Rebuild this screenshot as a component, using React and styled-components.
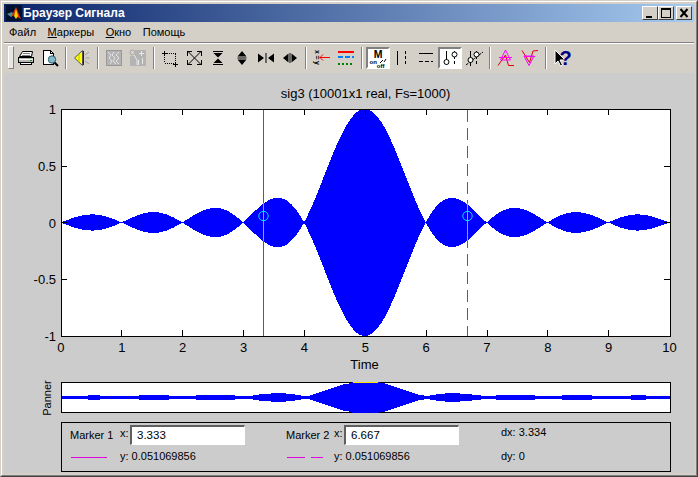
import React from 'react';
import styled, { createGlobalStyle } from 'styled-components';

const Global = createGlobalStyle`
  html, body { margin: 0; padding: 0; background: #d4d0c8; overflow: hidden; }
  #root { width: 698px; height: 477px; }
`;

const Win = styled.div`
  box-sizing: border-box; width: 698px; height: 477px;
  border: 1px solid; border-color: #d4d0c8 #404040 #404040 #d4d0c8;
  background: #d4d0c8; font-family: "Liberation Sans", Arial, sans-serif;
`;
const WinInner = styled.div`
  box-sizing: border-box; height: 100%;
  border: 1px solid; border-color: #fff #808080 #808080 #fff;
  padding: 2px; display: flex; flex-direction: column;
`;
const TitleBar = styled.div`
  height: 18px; flex: none; display: flex; align-items: center; padding: 0 2px;
  background: linear-gradient(90deg, #0a246a, #a6caf0);
`;
const AppIcon = styled.svg`width: 16px; height: 16px; flex: none; display: block;`;
const TitleText = styled.div`
  margin-left: 1px; flex: 1; color: #fff; font-weight: 700; font-size: 12px; line-height: 18px; white-space: nowrap;
`;
const CapBtn = styled.div`
  width: 16px; height: 14px; box-sizing: border-box; background: #d4d0c8; margin-left: ${p => p.$gap || 0}px;
  border: 1px solid; border-color: #fff #404040 #404040 #fff; display: flex; align-items: center; justify-content: center;
`;
const CapIcon = styled.svg`width: 14px; height: 12px; display: block;`;
const MenuBar = styled.div`
  height: 20px; flex: none; display: flex; align-items: center; padding-left: 5px; gap: 11.5px;
  font-size: 11px; color: #000; box-sizing: border-box;
`;
const MenuItem = styled.span`
  white-space: nowrap;
  u { text-decoration: underline; }
`;
const Toolbar = styled.div`
  flex: none; height: 31px; box-sizing: border-box; border-top: 1px solid #808080; 
  box-shadow: inset 0 1px 0 #fff; display: flex; align-items: flex-start; padding: 4px 0 0 4px;
`;
const Handle = styled.div`
  width: 6px; height: 23px; margin-top: -1px; box-sizing: border-box; background: #e8e6e0;
  border: 1px solid; border-color: #fff #808080 #808080 #fff;
`;
const Sep = styled.div`
  width: 8px; height: 22px; flex: none; display: flex; justify-content: center;
  &::before { content: ''; width: 2px; height: 22px; box-sizing: border-box; border-left: 1px solid #808080; border-right: 1px solid #fff; }
`;
const ToolBtn = styled.div`
  width: 24px; height: 22px; flex: none; box-sizing: border-box;
  ${p => p.$on ? 'border: 2px solid; border-color: #808080 #fff #fff #808080; background: #fff;' : ''}
  display: flex; align-items: center; justify-content: center;
`;
const Glyph = styled.svg`width: 24px; height: 22px; display: block; flex: none; overflow: visible; font-family: "Liberation Sans", sans-serif;`;

const Content = styled.div`
  flex: 1; background: #cccccc; padding-left: 57px; display: flex; flex-direction: column; color: #000;
`;
const PlotTitle = styled.div`
  width: 609px; margin-top: 13px; height: 16px; line-height: 16px; text-align: center; font-size: 13px;
`;
const ChartWrap = styled.div`margin-left: -57px; height: 254px;`;
const ChartSvg = styled.svg`
  display: block; width: 690px; height: 254px; font-family: "Liberation Sans", Arial, sans-serif; font-size: 13px;
`;
const AxisLabel = styled.div`
  width: 607px; margin-top: 1px; height: 16px; line-height: 16px; text-align: center; font-size: 13px;
`;
const PannerRow = styled.div`
  display: flex; margin-left: -21px; margin-top: 9px; height: 31px;
`;
const PannerLabel = styled.div`
  width: 21px; height: 31px; display: flex; align-items: center; justify-content: center; font-size: 11px;
  span { transform: rotate(-90deg); display: block; margin-left: -7px; }
`;
const PannerSvg = styled.svg`display: block; width: 610px; height: 31px;`;
const Readout = styled.div`
  box-sizing: border-box; width: 610px; height: 50px; margin-top: 9px; border: 1px solid #000;
  display: flex; padding: 2px 0 0 8px; font-size: 11px;
`;
const MarkerGroup = styled.div`
  width: ${p => p.$w}px; flex: none; display: grid; grid-template-columns: ${p => p.$label}px 10px 115px; grid-template-rows: 20px 24px; align-items: center;
`;
const SmallLabel = styled.span`white-space: nowrap; line-height: 13px;`;
const XLabel = styled.span`margin-top: -4px; line-height: 13px;`;
const Field = styled.div`
  box-sizing: border-box; height: 20px; background: #fff; font-size: 11.500px; line-height: 17px; padding-left: 5px;
  border: 1px solid; border-color: #606060 #fff #fff #606060; border-top-width: 2px; border-left-width: 2px;
`;
const SampleLine = styled.svg`display: block; width: 38px; height: 3px;`;
const YValue = styled.span`grid-column: 2 / 4; white-space: nowrap; line-height: 13px; margin-top: -1px;`;
const Delta = styled.div`
  display: flex; flex-direction: column; gap: 11px; padding-top: 1px; line-height: 13px;
`;

const sinc = t => { const d = Math.abs(t - 5); return d < 1e-6 ? 1 : Math.abs(Math.sin(Math.PI * d) / (Math.PI * d)); };
const X0 = 61, X1 = 670, SCALE = 60.87;
const tOf = x => (x - 60.5) / SCALE;

const envelopePath = () => {
  const top = [], bot = [];
  for (let x = X0 + 1; x <= X1; x++) {
    const h = Math.max(0.5, sinc(tOf(x)) * 113.5);
    top.push(`${x},${222.5 - h}`); bot.unshift(`${x},${222.5 + h}`);
  }
  return top.concat(bot).join(' ');
};

const pannerPath = () => {
  const top = [], bot = [];
  for (let x = 1; x < 609; x++) {
    const step = Math.floor(x / 3) * 3 + 1;
    const h = Math.min(15, Math.max(1, Math.ceil(sinc(step / SCALE) * 15)));
    const half = h + 0.5;
    top.push(`${x},${15.5 - half}`, `${x + 1},${15.5 - half}`);
    bot.unshift(`${x + 1},${15.5 + half}`, `${x},${15.5 + half}`);
  }
  return top.concat(bot).join(' ');
};

const Chart = () => {
  const xt = [0,1,2,3,4,5,6,7,8,9,10];
  const yt = [[1,109],[0.5,166],[0,222.5],[-0.5,279],[-1,336]];
  return (
    <ChartSvg viewBox="4 102 690 254">
      <rect x="61.5" y="109.5" width="609" height="226.5" fill="#fff" />
      <polygon points={envelopePath()} fill="#0000ff" shapeRendering="crispEdges" />
      {xt.map(t => {
        const x = Math.floor(61 + t * SCALE) + 0.5;
        return <g key={t}>
          {t > 0 && t < 10 && <path d={`M${x} 109v6M${x} 336v-6`} stroke="#000" shapeRendering="crispEdges" />}
          <text x={60.9 + t * SCALE} y="352" textAnchor="middle">{t}</text>
        </g>;
      })}
      {yt.map(([v, y]) => <g key={v}>
        {Math.abs(v) < 1 && <path d={`M61 ${y}h6M670 ${y}h-6`} stroke="#000" shapeRendering="crispEdges" />}
        <text x="56" y={y + 5} textAnchor="end">{v}</text>
      </g>)}
      <rect x="61.5" y="109.5" width="609" height="226.5" fill="none" stroke="#000" shapeRendering="crispEdges" />
      <path d="M263.5 110V336" stroke="#e000e0" shapeRendering="crispEdges" />
      <path d="M467.5 110V336" stroke="#e000e0" strokeDasharray="12 6" shapeRendering="crispEdges" />
      <path d="M263.5 203V241M467.5 203V241" stroke="#00e0ff" shapeRendering="crispEdges" />
      <circle cx="263.5" cy="216" r="4.7" fill="none" stroke="#00e0ff" />
      <circle cx="467.5" cy="216" r="4.7" fill="none" stroke="#00e0ff" />
    </ChartSvg>
  );
};

const Panner = () => (
  <PannerSvg viewBox="0 0 610 31">
    <rect width="610" height="31" fill="#000" />
    <rect x="1" y="1" width="608" height="29" fill="#fff" />
    <polygon points={pannerPath()} fill="#0000ff" shapeRendering="crispEdges" />
    <rect x="292" y="0" width="25" height="1" fill="#ffe000" />
  </PannerSvg>
);

const S = { shapeRendering: 'crispEdges' };
const Icons = {
  print: <>
    <path d="M8.5 4.500h10l-1 5h-12z" fill="#fff" stroke="#000" />
    <path d="M9 6.500h7M8 8.500h8" stroke="#808080" {...S} />
    <path d="M4.5 10.5h15v5h-15z" fill="#b8b8b8" stroke="#000" {...S} />
    <path d="M5 12h14" stroke="#fff" {...S} />
    <path d="M6.5 15.5h11v2h-11z" fill="#fff" stroke="#000" {...S} />
    <path d="M16 13h2" stroke="#00a000" {...S} />
  </>,
  preview: <>
    <path d="M5.5 3.5h7l3 3v11h-10z" fill="#fff" stroke="#000" {...S} />
    <path d="M12.5 3.5v3h3" fill="none" stroke="#000" {...S} />
    <circle cx="14" cy="12.5" r="3.7" fill="#88b8c8" stroke="#206070" />
    <path d="M16.5 15.5l3.5 3.5" stroke="#000" strokeWidth="2" />
  </>,
  speaker: <>
    <path d="M4.5 11l8-7.5v15z" fill="#ffff00" stroke="#555" />
    <path d="M9 7v8" stroke="#c0c000" />
    <path d="M13 4v14" stroke="#222" {...S} />
    <path d="M15 8l4-3M15.5 11h4M15 14l4 3" stroke="#a0a0a0" />
  </>,
  dis1: <>
    <rect x="4" y="3" width="16" height="16" fill="#b4b4b4" {...S} />
    <path d="M6 5l3 3-2 3 3 3-2 3M12 5l-2 3 3 3-2 3 3 3M17 5l-3 3 3 3-3 3 3 3" fill="none" stroke="#e4e4e4" />
    <path d="M4.5 3.5h15v15h-15z" fill="none" stroke="#989898" {...S} />
  </>,
  dis2: <>
    <path d="M9 3h11v16H4V9h5z" fill="#b4b4b4" {...S} />
    <circle cx="6.500" cy="5.500" r="2.500" fill="none" stroke="#a8a8a8" />
    <path d="M8 8l3 5v5" fill="none" stroke="#e8e8e8" />
    <path d="M15.500 4v5M13 6.500h5M16.500 11v6M12.500 13v5" stroke="#e8e8e8" {...S} />
  </>,
  zoomBox: <>
    <path d="M7 6.500h11M6.500 8v8M7 16.500h11M17.500 7v8" fill="none" stroke="#000" strokeDasharray="1 1" {...S} />
    <path d="M4 6.500h5M6.500 4v5M15 17.500h5M17.500 15v5" stroke="#000" {...S} />
  </>,
  zoomAll: <>
    <path d="M6 4.500l13 13M19 4.500L6 17.500" stroke="#000" />
    <path d="M5 4.500h5M5.500 4v5M20 4.500h-5M19.500 4v5M5 17.500h5M5.500 18v-5M20 17.500h-5M19.500 18v-5" stroke="#000" fill="none" {...S} />
  </>,
  zoomY: <>
    <path d="M7 4h10v1H7zM7 17h10v1H7zM7.500 6h9L12 10.500zM7.500 16h9L12 11.500z" fill="#000" />
  </>,
  zoomYOut: <>
    <path d="M12 4l4.500 5.500h-9zM12 18l4.500-5.500h-9zM7.500 10.500h9v1h-9z" fill="#000" />
  </>,
  zoomX: <>
    <path d="M4 6.500l6 4.500-6 4.500zM20 6.500l-6 4.500 6 4.500zM11.500 6h1v10h-1z" fill="#000" />
  </>,
  zoomXOut: <>
    <path d="M10.500 6.500L5 11l5.500 4.500zM13.500 6.500L19 11l-5.500 4.500zM11.500 6h1v10h-1z" fill="#000" />
  </>,
  markerSet: <>
    <text transform="translate(4.500 3) rotate(90)" fontSize="7" fontWeight="700" x="0" y="0" textLength="15">x=y</text>
    <path d="M10 10.500h10" stroke="#ff0000" {...S} />
    <path d="M13 7.500l-3 3 3 3" fill="none" stroke="#ff0000" />
  </>,
  lines: <>
    <rect x="4" y="3.500" width="16" height="2" fill="#ff0000" {...S} />
    <path d="M4 10h16" stroke="#0080ff" strokeWidth="2" strokeDasharray="5 2" {...S} />
    <path d="M4 16.500h16" stroke="#008000" strokeWidth="2" strokeDasharray="2 2" {...S} />
  </>,
  mark: <>
    <text x="12" y="10.500" fontSize="10.500" fontWeight="700" textAnchor="middle">M</text>
    <text x="3.500" y="17" fontSize="6" fontWeight="700">on</text>
    <path d="M14 16l3-3M18 15l2-3" stroke="#000" />
    <text x="10.800" y="21" fontSize="6" fontWeight="700">off</text>
  </>,
  vlines: <>
    <path d="M7.500 4v14" stroke="#000" {...S} />
    <path d="M15.500 4v14" stroke="#000" strokeDasharray="3 2" {...S} />
  </>,
  hlines: <>
    <path d="M5 6.500h14" stroke="#000" {...S} />
    <path d="M5 14.500h14" stroke="#000" strokeDasharray="4 2" {...S} />
  </>,
  track: <>
    <path d="M8.500 4v14" stroke="#000" strokeWidth="1" {...S} />
    <circle cx="8.500" cy="15" r="2.500" fill="#fff" stroke="#000" />
    <path d="M16.500 4v14" stroke="#000" strokeDasharray="3 2" {...S} />
    <circle cx="16.500" cy="7.500" r="2.500" fill="#fff" stroke="#000" />
  </>,
  trackSlope: <>
    <path d="M8.500 4v15" stroke="#000" {...S} />
    <path d="M14.500 4v15" stroke="#000" strokeDasharray="3 2" {...S} />
    <path d="M4 18L21 5" stroke="#000" strokeDasharray="3 1" />
    <circle cx="8.500" cy="13" r="2.500" fill="#fff" stroke="#000" />
    <circle cx="14.500" cy="7.500" r="2.500" fill="#fff" stroke="#000" />
  </>,
  peak: <>
    <path d="M4 18.500L11.500 8l3 10.500H20" fill="none" stroke="#e00000" />
    <path d="M11.500 3L6.500 13h10z" fill="none" stroke="#ff00ff" />
    <path d="M5 10.500h13" stroke="#ff00ff" {...S} />
  </>,
  valley: <>
    <path d="M4 3.500l7.500 12 3.500-11.500 5-.5" fill="none" stroke="#e00000" />
    <path d="M11 18.500L6 9h10z" fill="none" stroke="#ff00ff" />
    <path d="M6 9.500h11" stroke="#ff00ff" {...S} />
  </>,
  help: <>
    <path d="M5 3v14l3-3 2.500 5 2-1-2.500-5h5z" fill="#000" stroke="#fff" />
    <text x="15.500" y="17.500" fontSize="20" fontWeight="700" fill="#000080" textAnchor="middle">?</text>
  </>,
};

const Tool = ({ name, on }) => (
  <ToolBtn $on={on}>
    <Glyph viewBox="0 0 24 22">{Icons[name]}</Glyph>
  </ToolBtn>
);

export default function App() {
  const groups = [
    ['print', 'preview'], ['speaker'], ['dis1', 'dis2'],
    ['zoomBox', 'zoomAll', 'zoomY', 'zoomYOut', 'zoomX', 'zoomXOut'],
    ['markerSet', 'lines'], ['mark', 'vlines', 'hlines', 'track', 'trackSlope'],
    ['peak', 'valley'], ['help'],
  ];
  return (
    <Win>
      <Global />
      <WinInner>
        <TitleBar>
          <AppIcon viewBox="0 0 16 16">
            <rect width="16" height="16" fill="#001030" />
            <path d="M1 9l5-2 2 3-3 2z" fill="#509090" />
            <path d="M5 12l5-10 5 12-4-2-2-3z" fill="#e03000" />
            <path d="M8 11l2-7 2 7-2 3z" fill="#ffd000" />
          </AppIcon>
          <TitleText>Браузер Сигнала</TitleText>
          <CapBtn>
            <CapIcon viewBox="0 0 14 12"><rect x="3" y="9" width="6" height="2" fill="#000" /></CapIcon>
          </CapBtn>
          <CapBtn>
            <CapIcon viewBox="0 0 14 12"><path d="M2.500 2.500h9v8h-9z" fill="none" stroke="#000" shapeRendering="crispEdges" /><rect x="2" y="1" width="10" height="2" fill="#000" /></CapIcon>
          </CapBtn>
          <CapBtn $gap={2}>
            <CapIcon viewBox="0 0 14 12"><path d="M3.500 2l7 8M10.500 2l-7 8" stroke="#000" strokeWidth="2" fill="none" /></CapIcon>
          </CapBtn>
        </TitleBar>
        <MenuBar>
          <MenuItem>Файл</MenuItem>
          <MenuItem><u>М</u>аркеры</MenuItem>
          <MenuItem><u>О</u>кно</MenuItem>
          <MenuItem>Помощь</MenuItem>
        </MenuBar>
        <Toolbar>
          <Handle />
          {groups.map((g, i) => (
            <React.Fragment key={i}>
              {i > 0 && <Sep />}
              {g.map(n => <Tool key={n} name={n} on={n === 'mark' || n === 'track'} />)}
            </React.Fragment>
          ))}
        </Toolbar>
        <Content>
          <PlotTitle>sig3 (10001x1 real, Fs=1000)</PlotTitle>
          <ChartWrap><Chart /></ChartWrap>
          <AxisLabel>Time</AxisLabel>
          <PannerRow>
            <PannerLabel><span>Panner</span></PannerLabel>
            <Panner />
          </PannerRow>
          <Readout>
            <MarkerGroup $w={216} $label={50}>
              <SmallLabel>Marker 1</SmallLabel>
              <XLabel>x:</XLabel>
              <Field>3.333</Field>
              <SampleLine viewBox="0 0 38 3"><path d="M1 1.500h36" stroke="#e000e0" /></SampleLine>
              <YValue>y: 0.051069856</YValue>
            </MarkerGroup>
            <MarkerGroup $w={215} $label={48}>
              <SmallLabel>Marker 2</SmallLabel>
              <XLabel>x:</XLabel>
              <Field>6.667</Field>
              <SampleLine viewBox="0 0 38 3"><path d="M1 1.500h36" stroke="#e000e0" strokeDasharray="18 6" /></SampleLine>
              <YValue>y: 0.051069856</YValue>
            </MarkerGroup>
            <Delta>
              <SmallLabel>dx: 3.334</SmallLabel>
              <SmallLabel>dy: 0</SmallLabel>
            </Delta>
          </Readout>
        </Content>
      </WinInner>
    </Win>
  );
}
